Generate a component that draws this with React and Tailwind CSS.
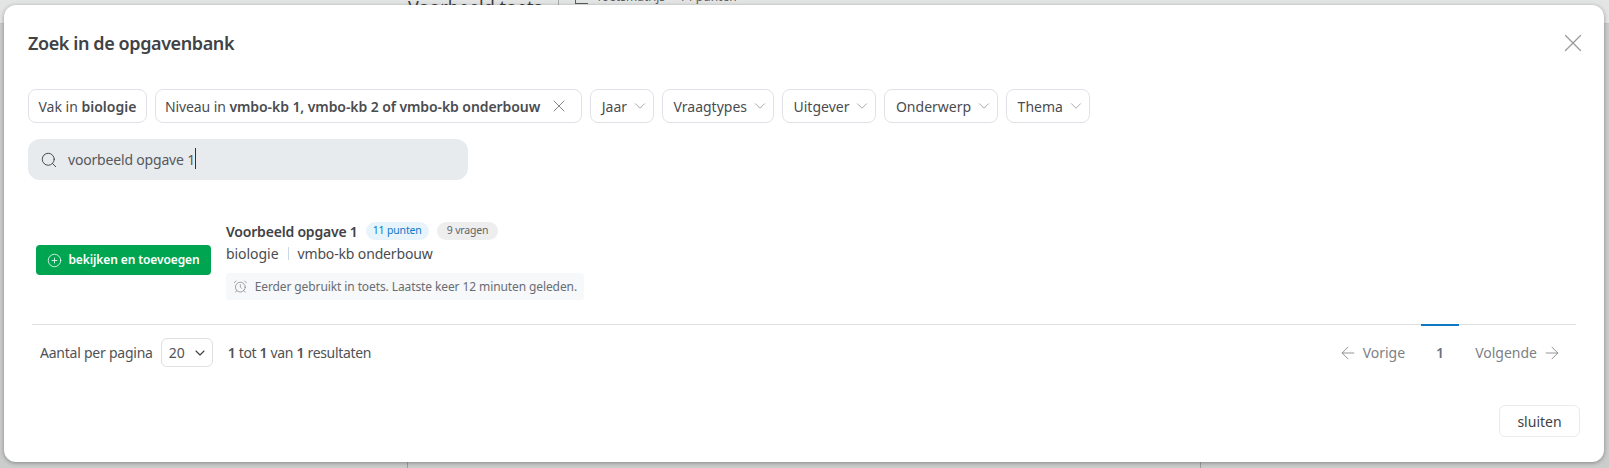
import React from "react";
import { X, ChevronDown, Search, CirclePlus, AlarmClock, ArrowLeft, ArrowRight } from "lucide-react";

const FilterChip = ({ label }) => (
  <button className="h-[34px] flex items-center gap-[4px] pl-[10.5px] pr-[4px] bg-white border border-[#e0e2e8] rounded-[8px] text-[14px] text-[#4a4c50]">
    {label}
    <ChevronDown className="w-[18px] h-[18px] text-[#8a8d92]" strokeWidth={1} />
  </button>
);

const App = () => {
  const filters = ["Jaar", "Vraagtypes", "Uitgever", "Onderwerp", "Thema"];

  return (
    <div className="relative w-[1609px] h-[468px] overflow-hidden bg-[#cbcccc] font-['Noto_Sans',sans-serif]">
      {/* page behind the modal */}
      <div className="absolute inset-x-0 top-0 h-[24px] bg-[#e3e4e4] border-b border-[#c4c5c5]" />
      <div className="absolute left-[408px] top-[-6px] text-[18px] text-[#3c3c3c] whitespace-nowrap">Voorbeeld toets</div>
      <div className="absolute left-[558px] top-0 w-px h-[5px] bg-[#a8a9a9]" />
      <div className="absolute left-[575px] top-0 w-[13px] h-[4px] border-l border-b border-[#5c5c5c]" />
      <div className="absolute left-[596px] top-[-12px] text-[12px] text-[#5c5c5c] whitespace-nowrap">Toetsmatrijs</div>
      <div className="absolute left-[679px] top-[-12px] text-[12px] text-[#5c5c5c] whitespace-nowrap">14 punten</div>
      <div className="absolute left-[407px] bottom-0 w-px h-[8px] bg-[#9c9d9d]" />
      <div className="absolute left-[1200px] bottom-0 w-px h-[8px] bg-[#9c9d9d]" />

      {/* modal */}
      <div className="absolute left-[4px] top-[5px] w-[1600px] h-[457px] bg-white rounded-[12px] shadow-[0_1px_4px_rgba(0,0,0,0.35)] pl-[24px] pr-[24px] flex flex-col">
        <div className="h-[76px] flex items-center justify-between shrink-0">
          <h1 className="text-[18px] font-semibold tracking-[-0.4px] text-[#404246]">Zoek in de opgavenbank</h1>
          <X className="w-[30px] h-[30px] text-[#9b9b9b] mr-[-8px]" strokeWidth={1} />
        </div>

        <div className="flex gap-[8px] mt-[8px]">
          <div className="h-[34px] flex items-center px-[9.5px] border border-[#e0e2e8] rounded-[8px] text-[14px] text-[#4a4c50]">
            Vak in&nbsp;<b className="font-semibold">biologie</b>
          </div>
          <div className="h-[34px] flex items-center gap-[9px] pl-[9px] pr-[12px] border border-[#e0e2e8] rounded-[8px] text-[14px] tracking-[-0.08px] text-[#4a4c50]">
            <span>Niveau in <b className="font-semibold">vmbo-kb 1, vmbo-kb 2 of vmbo-kb onderbouw</b></span>
            <X className="w-[20px] h-[20px] text-[#6b6d72]" strokeWidth={1} />
          </div>
          {filters.map((f) => (
            <FilterChip key={f} label={f} />
          ))}
        </div>

        <div className="mt-[16px] w-[440px] h-[41px] flex items-center gap-[10px] pl-[12px] bg-[#e8ebee] rounded-[12px] text-[14px] tracking-[-0.18px] text-[#55585c]">
          <Search className="w-[18px] h-[18px] text-[#404246]" strokeWidth={1.25} />
          <span className="relative">
            voorbeeld opgave 1
            <span className="absolute right-[-1px] top-[-1px] w-px h-[21px] bg-[#333]" />
          </span>
        </div>

        <div className="mt-[42px] flex items-center pl-[8px]">
          <button className="h-[30px] w-[175px] mb-[2px] flex items-center justify-center gap-[6px] bg-[#00a551] text-white rounded-[4px] text-[12px] font-semibold tracking-[-0.1px]">
            <CirclePlus className="w-[15px] h-[15px]" strokeWidth={1.25} />
            bekijken en toevoegen
          </button>
          <div className="ml-[15px]">
            <div className="flex items-center gap-[8px] h-[18px]">
              <span className="text-[14px] font-semibold tracking-[-0.2px] text-[#404246]">Voorbeeld opgave 1</span>
              <span className="h-[18px] px-[7px] flex items-center rounded-full bg-[#e8f4fc] text-[10.5px] tracking-[-0.15px] text-[#0b78c8]">11 punten</span>
              <span className="h-[18px] px-[10px] flex items-center rounded-full bg-[#eeeeee] text-[10.5px] tracking-[-0.15px] text-[#63656a]">9 vragen</span>
            </div>
            <div className="mt-[3px] text-[14px] tracking-[-0.05px] text-[#4a4c50] flex items-center h-[20px]">
              biologie
              <span className="mx-[9px] w-px h-[13px] bg-[#c9d9e6]" />
              <span className="tracking-[-0.15px]">vmbo-kb onderbouw</span>
            </div>
            <div className="mt-[10px] h-[27px] w-[358px] px-[7px] flex items-center gap-[7px] rounded-[4px] bg-[#f6f8fa] text-[12px] tracking-[-0.1px] text-[#6a6d72] whitespace-nowrap">
              <AlarmClock className="w-[15px] h-[15px] text-[#6a6d72]" strokeWidth={1} />
              Eerder gebruikt in toets. Laatste keer 12 minuten geleden.
            </div>
          </div>
        </div>

        <div className="mt-[24px] ml-[4px] mr-[4px] border-t border-[#dedfe0] flex justify-between items-start shrink-0">
          <div className="flex items-center pl-[8px] pt-[13px] text-[14px] text-[#505256]">
            <span className="tracking-[-0.24px]">Aantal per pagina</span>
            <span className="ml-[8px] w-[52px] h-[29px] border border-[#dedfe0] rounded-[6px] flex items-center justify-between pl-[7px] pr-[4px]">
              20
              <ChevronDown className="w-[16px] h-[16px] text-[#404246]" strokeWidth={1.75} />
            </span>
            <span className="ml-[15px] tracking-[-0.33px]"><b className="font-semibold">1</b> tot <b className="font-semibold">1</b> van <b className="font-semibold">1</b> resultaten</span>
          </div>
          <div className="flex items-start text-[14px] text-[#7d8085]">
            <span className="flex items-center gap-[5px] pt-[17px]">
              <ArrowLeft className="w-[20px] h-[20px]" strokeWidth={1} />
              Vorige
            </span>
            <span className="relative ml-[16px] w-[38px] text-center pt-[17px] font-semibold text-[#6b7280] before:absolute before:left-0 before:right-0 before:top-[-1px] before:h-[2px] before:bg-[#0b78c8]">1</span>
            <span className="flex items-center gap-[5px] pt-[17px] ml-[16px] mr-[14px]">
              Volgende
              <ArrowRight className="w-[20px] h-[20px]" strokeWidth={1} />
            </span>
          </div>
        </div>

        <div className="flex justify-end mt-auto mb-[25px]">
          <button className="w-[81px] h-[32px] border border-[#ebebeb] rounded-[6px] text-[14px] text-[#404246]">sluiten</button>
        </div>
      </div>
    </div>
  );
};

export default App;
